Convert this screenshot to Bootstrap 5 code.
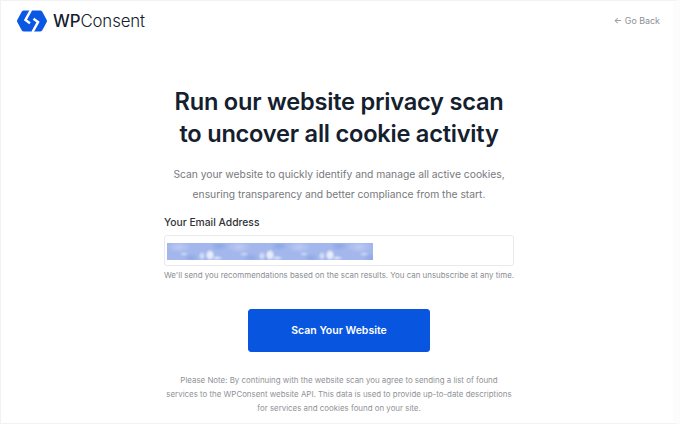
<!doctype html>
<html lang="en"><head><meta charset="utf-8">
<link href="https://cdn.jsdelivr.net/npm/bootstrap@5.3.0/dist/css/bootstrap.min.css" rel="stylesheet">
<style>
html,body{height:424px;overflow:hidden;background:#fff}
body{font-family:Inter,"Liberation Sans",sans-serif;color:#14202e}
.shell{height:424px;border:1px solid #f1f2f4;border-right:7px solid #fcfcfc;overflow:hidden}
.topbar{height:40px;padding:0 13px 0 16px}
.logoline{gap:6px}
.brand{font-family:Inter,sans-serif;font-size:16.8px;letter-spacing:-.1px;color:#14202e;line-height:1;font-weight:300}
.brand b{font-weight:500}
.back{font-size:8.9px;color:#8b8f96;text-decoration:none}
.stage{padding-left:4px}
.scanbox{width:350px;margin-top:-7px}
h1.head{font-size:23.6px;line-height:32px;font-weight:600;letter-spacing:-.23px;margin:52px 0 0;color:#14202e;white-space:nowrap}
.intro{font-size:10.3px;line-height:20px;color:#77797d;margin:14px 0 0;white-space:nowrap}
.lab{font-size:10.3px;font-weight:500;color:#2d3338;margin:10px 0 5px;line-height:16px;display:block}
.emailbox{height:31px;border:1px solid #e9eaec;border-radius:3px;padding:7px 2px}
.blurred{width:206px;height:17px;background-color:#a3b7ec;background-image:radial-gradient(ellipse 5px 6px at 43px 12px,#eef1fb 0,#e0e7f9 45%,transparent 100%),radial-gradient(ellipse 4px 5px at 35px 13px,#dbe3f8 0,transparent 100%),radial-gradient(ellipse 6px 3px at 50px 15px,#d8e1f8 0,transparent 100%),radial-gradient(ellipse 5px 3px at 17px 11px,#c6d2f4 0,transparent 100%),radial-gradient(ellipse 12px 6px at 12px 4px,#bccaf2 0,transparent 100%),radial-gradient(ellipse 9px 5px at 52px 3px,#8da7e5 0,transparent 100%),radial-gradient(ellipse 8px 5px at 24px 15px,#8fa9e6 0,transparent 100%);background-size:60px 17px}
.hint{font-size:7.9px;color:#8a8d92;margin:3px 0 0;line-height:12px;white-space:nowrap}
.scanbtn{width:182px;height:43px;margin-top:28px;background:#0855e0;border-color:#0855e0;font-size:10.5px;font-weight:600;border-radius:3px;display:flex;align-items:center;justify-content:center}
.note{font-size:7.9px;line-height:14px;color:#8f9297;margin:21px 0 0;white-space:nowrap}
</style></head><body>
<div class="shell d-flex flex-column">
<header class="topbar d-flex align-items-center justify-content-between">
<div class="d-flex align-items-center logoline">
<svg width="30" height="22" viewBox="0 0 30 22" aria-hidden="true"><path fill="#0a57e3" d="M7 0.500h16q1.500 0 2.300 1.300L29.600 9.700q.8 1.300 0 2.600L25.300 20.200q-.8 1.300-2.300 1.300H7q-1.500 0-2.300-1.300L.4 12.300q-.8-1.300 0-2.600L4.700 1.800Q5.500.5 7 .5z"/><path fill="none" stroke="#fff" stroke-width="2.500" d="M14 0 8.500 10l4.500 3.200"/><path fill="none" stroke="#fff" stroke-width="2.500" d="M15.500 22 21 12l-4.500-3.200"/></svg>
<span class="brand"><b>WP</b>Consent</span>
</div>
<a class="back" href="#">← Go Back</a>
</header>
<main class="stage d-flex justify-content-center">
<div class="scanbox text-center">
<h1 class="head">Run our website privacy scan<br>to uncover all cookie activity</h1>
<p class="intro">Scan your website to quickly identify and manage all active cookies,<br>ensuring transparency and better compliance from the start.</p>
<form class="text-start">
<label class="lab">Your Email Address</label>
<div class="emailbox"><div class="blurred"></div></div>
<p class="hint">We'll send you recommendations based on the scan results. You can unsubscribe at any time.</p>
<button type="button" class="btn btn-primary scanbtn mx-auto">Scan Your Website</button>
</form>
<p class="note">Please Note: By continuing with the website scan you agree to sending a list of found<br>services to the WPConsent website API. This data is used to provide up-to-date descriptions<br>for services and cookies found on your site.</p>
</div>
</main>
</div>
<script src="https://cdn.jsdelivr.net/npm/bootstrap@5.3.0/dist/js/bootstrap.bundle.min.js"></script>
</body></html>
